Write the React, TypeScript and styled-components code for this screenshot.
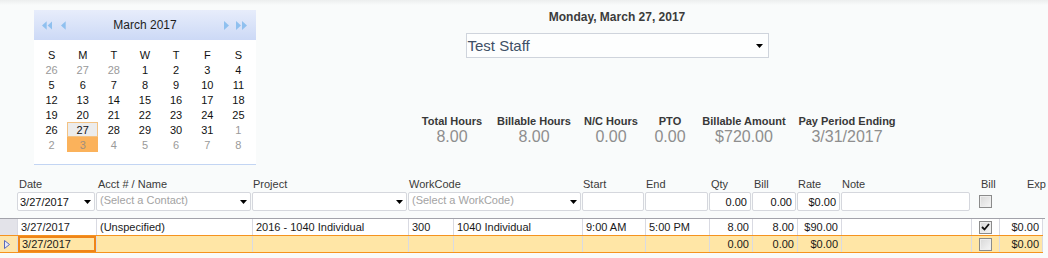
import React from "react";
import styled, { createGlobalStyle, css } from "styled-components";

const Global = createGlobalStyle`
  html, body { margin: 0; padding: 0; background: #f9fbfb; }
  body {
    font-family: "Liberation Sans", Arial, sans-serif;
    width: 1048px;
    height: 258px;
    overflow: hidden;
  }
`;

const COLS =
  "17px 79px 156px 156px 45px 129px 63px 64px 43px 45px 44px 130px 28px 44px";

const Page = styled.div`
  width: 1048px;
  height: 258px;
  box-sizing: border-box;
  padding-top: 10px;
  background: linear-gradient(#eceeee, #f9fbfb 5px);
`;

const Top = styled.div`
  display: flex;
  align-items: flex-start;
  padding-left: 34px;
  height: 156px;
`;

/* ---------- Calendar ---------- */
const Calendar = styled.div`
  width: 222px;
  background: #ffffff;
  border-bottom: 1px solid #c3d5f3;
`;

const CalHeader = styled.div`
  height: 30px;
  display: flex;
  align-items: center;
  padding: 0 8px;
  background: linear-gradient(#e7edfb, #ccd9f6);
`;

const NavGroup = styled.div<{ $gap: number }>`
  display: flex;
  align-items: center;
  gap: ${(p) => p.$gap}px;
  width: 24px;
  justify-content: flex-start;
`;

const CalTitle = styled.div`
  flex: 1;
  text-align: center;
  font-size: 12px;
  color: #1d1d1d;
`;

const CalBody = styled.div`
  padding: 7px 2px 12px;
  display: grid;
  grid-template-columns: repeat(7, 1fr);
  grid-auto-rows: 15px;
  font-size: 11px;
`;

const DayHead = styled.div`
  height: 16px;
  display: flex;
  align-items: center;
  justify-content: center;
  color: #111;
`;

const Day = styled.div<{ $kind?: "other" | "selected" | "today" }>`
  height: 15px;
  display: flex;
  align-items: center;
  justify-content: center;
  color: #111;
  ${(p) =>
    p.$kind === "other" &&
    css`
      color: #9a9a9a;
    `}
  ${(p) =>
    p.$kind === "selected" &&
    css`
      background: #ececec;
      box-shadow: inset 0 0 0 1px #f3c283;
    `}
  ${(p) =>
    p.$kind === "today" &&
    css`
      background: #fbb25b;
      color: #a08f7f;
    `}
`;

const Arrow = ({ dir, double }: { dir: "l" | "r"; double?: boolean }) => {
  const one = (x: number) =>
    dir === "l"
      ? `${x + 5},0 ${x + 5},9 ${x},4.5`
      : `${x},0 ${x},9 ${x + 5},4.5`;
  return (
    <svg width={double ? 11 : 5} height={9} viewBox={`0 0 ${double ? 11 : 5} 9`}>
      <polygon points={one(0)} fill="#8fc0ef" />
      {double && <polygon points={one(6)} fill="#8fc0ef" />}
    </svg>
  );
};

/* ---------- Right panel ---------- */
const RightPanel = styled.div`
  width: 722px;
  display: flex;
  flex-direction: column;
  align-items: center;
`;

const DateTitle = styled.div`
  font-size: 12px;
  line-height: 14px;
  font-weight: bold;
  color: #3b3b3b;
`;

const StaffSelect = styled.div`
  margin-top: 9px;
  width: 303px;
  height: 25px;
  box-sizing: border-box;
  border: 1px solid #cfd4dc;
  background: #fdfefe;
  display: flex;
  align-items: center;
  justify-content: space-between;
  padding: 0 5px 0 1px;
  font-size: 15px;
  color: #3f5066;
`;

const Summary = styled.div`
  align-self: flex-start;
  margin-left: 159px;
  margin-top: 57px;
  display: flex;
`;

const SummaryCol = styled.div<{ $w: number }>`
  width: ${(p) => p.$w}px;
  text-align: center;
  white-space: nowrap;
`;

const SummaryLabel = styled.div`
  font-size: 11px;
  line-height: 13px;
  font-weight: bold;
  color: #383838;
`;

const SummaryValue = styled.div`
  font-size: 16px;
  line-height: 18px;
  color: #8e8e8e;
`;

/* ---------- Grid ---------- */
const Grid = styled.div`
  margin-top: 11px;
  font-size: 11px;
`;

const HeaderRow = styled.div`
  display: grid;
  grid-template-columns: ${COLS};
  height: 14px;
  align-items: center;
  color: #3a3a3a;
`;

const HeadLabel = styled.div<{ $col: string; $pl: number }>`
  grid-column: ${(p) => p.$col};
  padding-left: ${(p) => p.$pl}px;
  white-space: nowrap;
`;

const FilterRow = styled.div`
  display: grid;
  grid-template-columns: ${COLS};
  height: 19px;
  margin-top: 1px;
`;

const FilterBox = styled.div<{ $col: string; $align?: "right" }>`
  grid-column: ${(p) => p.$col};
  margin-right: 1px;
  height: 19px;
  box-sizing: border-box;
  border: 1px solid #d5d7dd;
  border-radius: 2px;
  background: #ffffff;
  display: flex;
  align-items: center;
  justify-content: ${(p) => (p.$align === "right" ? "flex-end" : "space-between")};
  padding: 0 3px 0 2px;
  color: #111;
  white-space: nowrap;
  overflow: hidden;
`;

const Placeholder = styled.span`
  color: #a3a3a3;
  padding-left: 1px;
  margin-top: -3px;
`;

const CheckCell = styled.div<{ $col: string }>`
  grid-column: ${(p) => p.$col};
  display: flex;
  align-items: center;
  justify-content: center;
`;

const Separator = styled.div`
  margin-top: 7px;
  width: 1045px;
  border-top: 1px solid #a2a2aa;
`;

const DataRow = styled.div<{ $active?: boolean }>`
  display: grid;
  grid-template-columns: ${COLS};
  width: 1043px;
  height: 16px;
  background: #ffffff;
  ${(p) =>
    p.$active &&
    css`
      background: #ffe6a6;
      border-top: 1px solid #f5931f;
      border-bottom: 1px solid #f5931f;
    `}
`;

const RowSelector = styled.div<{ $active?: boolean }>`
  background: ${(p) => (p.$active ? "#fde5ab" : "#e3e3e9")};
  display: flex;
  align-items: center;
  padding-left: 4px;
`;

const Cell = styled.div<{ $align?: "right"; $focus?: boolean; $last?: boolean }>`
  border-left: 1px solid #d9dae2;
  ${(p) => p.$last && "border-right: 1px solid #d9dae2;"}
  display: flex;
  align-items: center;
  justify-content: ${(p) => (p.$align === "right" ? "flex-end" : "flex-start")};
  padding: 0 3px;
  color: #1a1a1a;
  white-space: nowrap;
  overflow: hidden;
  ${(p) =>
    p.$focus &&
    css`
      box-shadow: inset 0 0 0 2px #ef8418;
      padding-left: 4px;
    `}
`;

const CheckCenter = styled(Cell)`
  justify-content: center;
  padding: 0;
`;

const Box = styled.div`
  width: 13px;
  height: 13px;
  box-sizing: border-box;
  border: 1px solid #8b8b8b;
  background: linear-gradient(135deg, #d8d8d8, #f6f6f6);
  box-shadow: inset 0 0 0 1px #eeeeee;
  display: flex;
  align-items: center;
  justify-content: center;
`;

const CheckBox = ({ checked }: { checked?: boolean }) => (
  <Box>
    {checked && (
      <svg width="9" height="8" viewBox="0 0 9 8">
        <path d="M1 4 L3.5 6.5 L8 1" stroke="#111" strokeWidth="1.8" fill="none" />
      </svg>
    )}
  </Box>
);

const DropArrow = () => (
  <svg width="7" height="4" viewBox="0 0 7 4" style={{ flexShrink: 0 }}>
    <polygon points="0,0 7,0 3.5,4" fill="#000" />
  </svg>
);

const RowPointer = () => (
  <svg width="6" height="9" viewBox="0 0 6 9">
    <polygon points="0.5,0.5 5.5,4.5 0.5,8.5" fill="#e6e8fb" stroke="#5a6bb8" strokeWidth="1" />
  </svg>
);

const weeks: [string, "other" | "selected" | "today" | undefined][][] = [
  [["26", "other"], ["27", "other"], ["28", "other"], ["1", undefined], ["2", undefined], ["3", undefined], ["4", undefined]],
  [["5", undefined], ["6", undefined], ["7", undefined], ["8", undefined], ["9", undefined], ["10", undefined], ["11", undefined]],
  [["12", undefined], ["13", undefined], ["14", undefined], ["15", undefined], ["16", undefined], ["17", undefined], ["18", undefined]],
  [["19", undefined], ["20", undefined], ["21", undefined], ["22", undefined], ["23", undefined], ["24", undefined], ["25", undefined]],
  [["26", undefined], ["27", "selected"], ["28", undefined], ["29", undefined], ["30", undefined], ["31", undefined], ["1", "other"]],
  [["2", "other"], ["3", "today"], ["4", "other"], ["5", "other"], ["6", "other"], ["7", "other"], ["8", "other"]],
];

const summary = [
  { label: "Total Hours", value: "8.00", w: 74 },
  { label: "Billable Hours", value: "8.00", w: 90 },
  { label: "N/C Hours", value: "0.00", w: 64 },
  { label: "PTO", value: "0.00", w: 54 },
  { label: "Billable Amount", value: "$720.00", w: 94 },
  { label: "Pay Period Ending", value: "3/31/2017", w: 112 },
];

const headers = [
  { t: "Date", col: "2", pl: 2 },
  { t: "Acct # / Name", col: "3", pl: 2 },
  { t: "Project", col: "4", pl: 1 },
  { t: "WorkCode", col: "5 / 7", pl: 1 },
  { t: "Start", col: "7", pl: 1 },
  { t: "End", col: "8", pl: 1 },
  { t: "Qty", col: "9", pl: 2 },
  { t: "Bill", col: "10", pl: 2 },
  { t: "Rate", col: "11", pl: 1 },
  { t: "Note", col: "12", pl: 1 },
  { t: "Bill", col: "13", pl: 10 },
  { t: "Exp", col: "14", pl: 28 },
];

export default function App() {
  return (
    <>
      <Global />
      <Page>
        <Top>
          <Calendar>
            <CalHeader>
              <NavGroup $gap={9}>
                <Arrow dir="l" double />
                <Arrow dir="l" />
              </NavGroup>
              <CalTitle>March 2017</CalTitle>
              <NavGroup $gap={7}>
                <Arrow dir="r" />
                <Arrow dir="r" double />
              </NavGroup>
            </CalHeader>
            <CalBody>
              {["S", "M", "T", "W", "T", "F", "S"].map((d, i) => (
                <DayHead key={"h" + i}>{d}</DayHead>
              ))}
              {weeks.flat().map(([d, k], i) => (
                <Day key={i} $kind={k}>
                  {d}
                </Day>
              ))}
            </CalBody>
          </Calendar>
          <RightPanel>
            <DateTitle>Monday, March 27, 2017</DateTitle>
            <StaffSelect>
              <span>Test Staff</span>
              <DropArrow />
            </StaffSelect>
            <Summary>
              {summary.map((s) => (
                <SummaryCol key={s.label} $w={s.w}>
                  <SummaryLabel>{s.label}</SummaryLabel>
                  <SummaryValue>{s.value}</SummaryValue>
                </SummaryCol>
              ))}
            </Summary>
          </RightPanel>
        </Top>

        <Grid>
          <HeaderRow>
            {headers.map((h, i) => (
              <HeadLabel key={i} $col={h.col} $pl={h.pl}>
                {h.t}
              </HeadLabel>
            ))}
          </HeaderRow>
          <FilterRow>
            <FilterBox $col="2">
              <span>3/27/2017</span>
              <DropArrow />
            </FilterBox>
            <FilterBox $col="3">
              <Placeholder>(Select a Contact)</Placeholder>
              <DropArrow />
            </FilterBox>
            <FilterBox $col="4" style={{ justifyContent: "flex-end" }}>
              <DropArrow />
            </FilterBox>
            <FilterBox $col="5 / 7">
              <Placeholder>(Select a WorkCode)</Placeholder>
              <DropArrow />
            </FilterBox>
            <FilterBox $col="7" />
            <FilterBox $col="8" />
            <FilterBox $col="9" $align="right">0.00</FilterBox>
            <FilterBox $col="10" $align="right">0.00</FilterBox>
            <FilterBox $col="11" $align="right">$0.00</FilterBox>
            <FilterBox $col="12" />
            <CheckCell $col="13">
              <CheckBox />
            </CheckCell>
          </FilterRow>
          <Separator />
          <DataRow>
            <RowSelector />
            <Cell>3/27/2017</Cell>
            <Cell>(Unspecified)</Cell>
            <Cell>2016 - 1040 Individual</Cell>
            <Cell>300</Cell>
            <Cell>1040 Individual</Cell>
            <Cell>9:00 AM</Cell>
            <Cell>5:00 PM</Cell>
            <Cell $align="right">8.00</Cell>
            <Cell $align="right">8.00</Cell>
            <Cell $align="right">$90.00</Cell>
            <Cell />
            <CheckCenter>
              <CheckBox checked />
            </CheckCenter>
            <Cell $align="right" $last>
              $0.00
            </Cell>
          </DataRow>
          <DataRow $active>
            <RowSelector $active>
              <RowPointer />
            </RowSelector>
            <Cell $focus>3/27/2017</Cell>
            <Cell />
            <Cell />
            <Cell />
            <Cell />
            <Cell />
            <Cell />
            <Cell $align="right">0.00</Cell>
            <Cell $align="right">0.00</Cell>
            <Cell $align="right">$0.00</Cell>
            <Cell />
            <CheckCenter>
              <CheckBox />
            </CheckCenter>
            <Cell $align="right" $last>
              $0.00
            </Cell>
          </DataRow>
        </Grid>
      </Page>
    </>
  );
}
